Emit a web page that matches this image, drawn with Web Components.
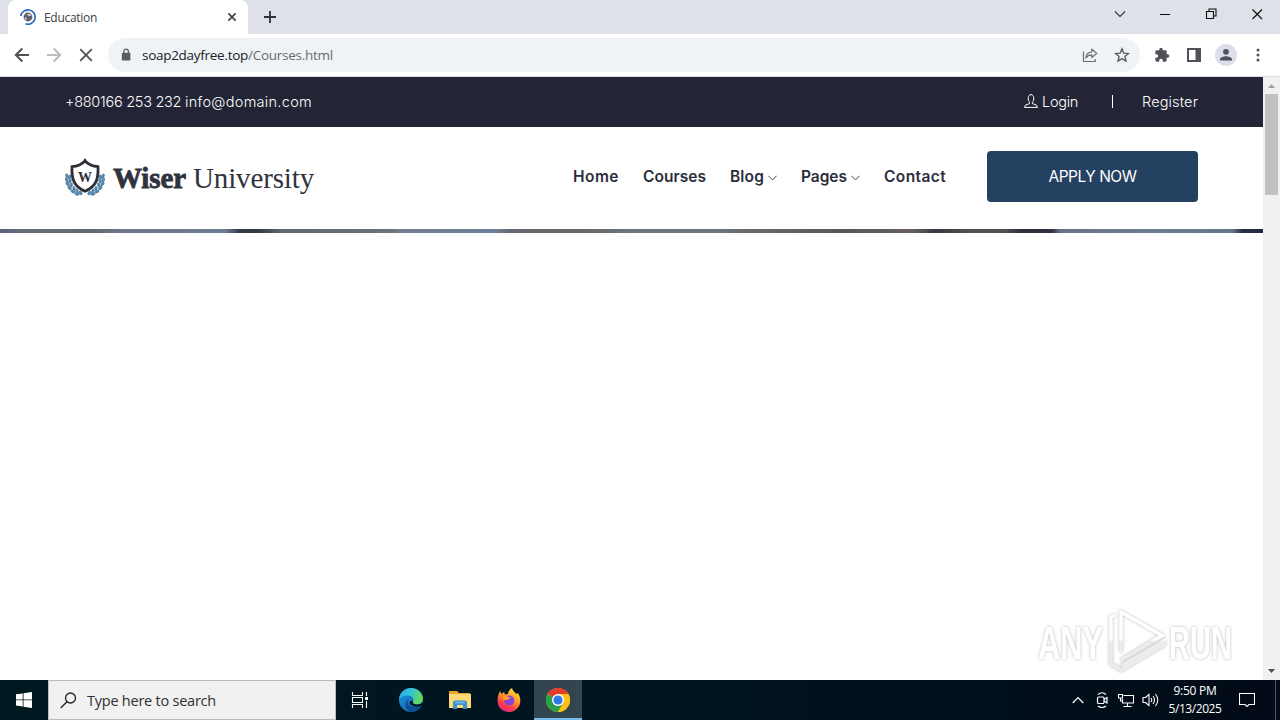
<!DOCTYPE html>
<html lang="en">
<head>
<meta charset="utf-8">
<title>Education</title>
<style>
    body {
        margin: 0;
        width: 1280px;
        height: 720px;
        overflow: hidden;
        background: white;
        font-family: "Open Sans", "Noto Sans", sans-serif;
    }
</style>
</head>
<body>
<desktop-screen>
    <tab-strip slot="window">Education</tab-strip>
    <tool-bar slot="window" host="soap2dayfree.top" path="/Courses.html"></tool-bar>
    <page-view slot="window">
        <top-bar></top-bar>
        <site-header></site-header>
        <hero-strip></hero-strip>
    </page-view>
    <task-bar slot="taskbar"></task-bar>
</desktop-screen>

<script>
function define(name, html, setup) {
  const template = document.createElement("template");
  template.innerHTML = html;

  class Element extends HTMLElement {
    constructor() {
      super();
      this.attachShadow({ mode: "open" });
      this.shadowRoot.appendChild(template.content.cloneNode(true));
    }

    connectedCallback() {
      if (setup) setup(this, this.shadowRoot);
    }
  }

  window.customElements.define(name, Element);
}

// one line of text, tracked so that it fills the given width
define("text-run", `
<style>
    :host {
        display: inline-block;
        white-space: nowrap;
        flex: none;
    }

    span {
        display: inline-block;
        white-space: pre;
    }
</style>
<span><slot></slot></span>
`, (el, root) => {
  const width = Number(el.getAttribute("width"));
  const span = root.querySelector("span");
  const spare = width - span.getBoundingClientRect().width;
  span.style.letterSpacing = spare / el.textContent.length + "px";
  el.style.width = width + "px";
});

define("desktop-screen", `
<style>
    :host {
        display: flex;
        flex-direction: column;
        width: 1280px;
        height: 720px;
        position: relative;
    }

    any-run {
        position: absolute;
        left: 1030px;
        top: 606px;
    }
</style>
<slot name="window"></slot>
<slot name="taskbar"></slot>
<any-run></any-run>
`);

define("tab-strip", `
<style>
    :host {
        display: flex;
        height: 34px;
        flex: none;
        background: #dee1e8;
        padding-left: 8px;
        box-sizing: border-box;
    }

    .tab {
        width: 240px;
        box-sizing: border-box;
        background: white;
        border-radius: 8px 8px 0 0;
        display: flex;
        align-items: center;
        padding: 0 11px 0 12px;
        font-size: 12px;
        color: #3c4043;
    }

    text-run {
        margin-left: 8px;
    }

    .close {
        margin-left: auto;
    }

    .plus {
        margin: 10px 0 0 15px;
    }

    .controls {
        margin-left: auto;
        display: flex;
        align-items: center;
        height: 28px;
        gap: 32px;
        padding-right: 17px;
    }

    svg {
        display: block;
        flex: none;
    }
</style>
<div class="tab">
    <svg width="16" height="16" viewBox="0 0 16 16" fill="none">
        <path d="M.8 7A7.2 7.2 0 1 1 5.5 14.8" stroke="#2b69c0" stroke-width="1.7"/>
        <path d="M3.2 3.6A6 6 0 0 1 8 1.9" stroke="#7fa6dc" stroke-width="1"/>
        <circle cx="8" cy="8" r="4.4" fill="#5f6368"/>
        <path d="M5 9.2l1.600.8M7.600 5.400l1.400.7 1.800.2" stroke="#e8e8e8" stroke-width="1.500"/>
    </svg>
    <text-run width="53"></text-run>
    <svg class="close" width="10" height="10" viewBox="0 0 10 10" stroke="#3c4043" stroke-width="1.6"><path d="M1.4 1.4l7.2 7.2M8.6 1.4l-7.2 7.2"/></svg>
</div>
<svg class="plus" width="14" height="14" viewBox="0 0 14 14" stroke="#2f3337" stroke-width="1.8"><path d="M7 1v12M1 7h12"/></svg>
<div class="controls">
    <svg width="14" height="12" viewBox="0 0 14 12" fill="none" stroke="#333" stroke-width="1.1"><path d="M2 3.500l5 5 5-5"/></svg>
    <svg width="12" height="12" viewBox="0 0 12 12" stroke="#111"><path d="M1 6.5h10"/></svg>
    <svg width="16" height="12" viewBox="0 0 16 12" fill="none" stroke="#111" stroke-width="1.1"><path d="M3.5 3.5h7v7h-7zM6 3V1h7v7h-2"/></svg>
    <svg width="12" height="12" viewBox="0 0 12 12" stroke="#111" stroke-width="1.2"><path d="M1.5 1.5l9.5 9.5M11 1.5L1.5 11"/></svg>
</div>
`, (el, root) => {
  const run = root.querySelector("text-run");
  run.textContent = el.textContent;
  run.connectedCallback();
});

define("tool-bar", `
<style>
    :host {
        display: flex;
        align-items: center;
        height: 43px;
        flex: none;
        box-sizing: border-box;
        border-bottom: 1px solid #dcdee2;
        padding: 0 12px 0 14px;
        background: white;
    }

    svg {
        display: block;
        flex: none;
    }

    .nav {
        display: flex;
        gap: 16px;
    }

    .omnibox {
        width: 1032px;
        height: 34px;
        box-sizing: border-box;
        margin-left: 14px;
        border-radius: 17px;
        background: #f0f3f5;
        display: flex;
        align-items: center;
        padding: 0 10px 0 12px;
        font-size: 13.5px;
        color: #202124;
    }

    .omnibox .host {
        margin-left: 10px;
    }

    .omnibox .path {
        color: #686c70;
    }

    .share {
        margin-left: auto;
    }

    .star {
        margin-left: 16px;
    }

    .tools {
        display: flex;
        align-items: center;
        margin-left: auto;
    }
</style>
<div class="nav">
    <svg width="16" height="16" viewBox="0 0 16 16" fill="none" stroke="#4f5357" stroke-width="2"><path d="M15 8H2M8.3 1.5L1.8 8l6.5 6.5"/></svg>
    <svg width="16" height="16" viewBox="0 0 16 16" fill="none" stroke="#babcbe" stroke-width="2"><path d="M1 8h13M7.7 1.5L14.2 8l-6.5 6.5"/></svg>
    <svg width="16" height="16" viewBox="0 0 16 16" fill="none" stroke="#4f5357" stroke-width="1.8"><path d="M2.2 2.2l11.6 11.6M13.8 2.2L2.2 13.8"/></svg>
</div>
<div class="omnibox">
    <svg width="12" height="14" viewBox="0 0 12 14"><rect x="1.8" y="4.8" width="8.6" height="7.8" rx="1" fill="#5a5e63"/><path d="M3.8 5V3.5a2.3 2.3 0 0 1 4.6 0V5" fill="none" stroke="#5a5e63" stroke-width="1.3"/></svg>
    <text-run class="host" width="106"></text-run>
    <text-run class="path" width="85"></text-run>
    <svg class="share" width="16" height="16" viewBox="0 0 16 16" fill="none" stroke="#696d71" stroke-width="1.2"><path d="M1.5 4.5v10h11.7V12"/><path d="M3.8 11c.3-4 2.5-5.8 6-6V2.2l5 4.2-5 4.1V7.8c-2.8 0-4.4.9-6 3.2z" stroke-linejoin="round"/></svg>
    <svg class="star" width="16" height="16" viewBox="0 0 16 16" fill="none" stroke="#5a5e63" stroke-width="1.4"><path d="M8 1.9l1.8 4.2 4.6.4-3.5 3 1.1 4.5-4-2.4L4 14l1.1-4.5-3.5-3 4.6-.4z"/></svg>
</div>
<div class="tools">
    <svg width="16" height="16" viewBox="0 0 24 24" fill="#4f5357"><path d="M20.5 11H19V7a2 2 0 0 0-2-2h-4V3.5a2.5 2.5 0 0 0-5 0V5H4a2 2 0 0 0-2 2v3.8h1.5a2.7 2.7 0 0 1 0 5.4H2V20a2 2 0 0 0 2 2h3.8v-1.5a2.7 2.7 0 0 1 5.4 0V22H17a2 2 0 0 0 2-2v-4h1.5a2.5 2.5 0 0 0 0-5z"/></svg>
    <svg width="14" height="14" viewBox="0 0 14 14" style="margin-left:17px"><path d="M0 0h14v14H0zM2 2v10h6.5V2z" fill="#4f5357" fill-rule="evenodd"/></svg>
    <svg width="22" height="22" viewBox="0 0 22 22" style="margin-left:14px"><circle cx="11" cy="11" r="11" fill="#dcdfe7"/><circle cx="11" cy="7.8" r="2.9" fill="#4c5060"/><path d="M5 16.6v-1.4c0-2 4-3 6-3s6 1 6 3v1.4z" fill="#4c5060"/></svg>
    <svg width="4" height="16" viewBox="0 0 4 16" fill="#4f5357" style="margin:0 8px 0 19px"><circle cx="2" cy="3" r="1.5"/><circle cx="2" cy="8" r="1.5"/><circle cx="2" cy="13" r="1.5"/></svg>
</div>
`, (el, root) => {
  for (const part of ["host", "path"]) {
    const run = root.querySelector("." + part);
    run.textContent = el.getAttribute(part);
    run.connectedCallback();
  }
});

define("page-view", `
<style>
    :host {
        display: flex;
        flex: 1;
        min-height: 0;
        background: white;
    }

    main {
        width: 1263px;
        font-family: Inter, "Open Sans", sans-serif;
    }

    aside {
        width: 17px;
        background: #f1f1f1;
        display: flex;
        flex-direction: column;
        align-items: center;
    }

    .thumb {
        width: 13px;
        height: 101px;
        background: #c1c1c1;
    }

    svg {
        display: block;
    }

    .down {
        margin-top: auto;
    }
</style>
<main><slot></slot></main>
<aside>
    <svg width="17" height="17" viewBox="0 0 17 17" fill="#a0a0a0"><path d="M5 11l3.5-4L12 11z"/></svg>
    <div class="thumb"></div>
    <svg class="down" width="17" height="17" viewBox="0 0 17 17" fill="#505050"><path d="M5 6l3.5 4L12 6z"/></svg>
</aside>
`);

define("top-bar", `
<style>
    :host {
        display: flex;
        align-items: center;
        height: 50px;
        box-sizing: border-box;
        padding: 0 65px 2px;
        background: #232536;
        color: white;
        font-size: 14.5px;
        font-weight: 300;
    }

    .account {
        margin-left: auto;
        display: flex;
        align-items: center;
    }

    .rule {
        width: 1px;
        height: 13px;
        background: white;
        margin: 0 29px 0 34px;
    }

    svg {
        margin-right: 4px;
    }
</style>
<text-run width="120">+880166 253 232 </text-run>
<text-run width="127">info@domain.com</text-run>
<div class="account">
    <svg width="14" height="14" viewBox="0 0 14 14" fill="none" stroke="white"><path d="M5.6 8.2C3.4 6.4 3.8.6 7 .6s3.6 5.8 1.4 7.6v1.4l4.1 1.5 1 2.3H.5l1-2.3 4.1-1.5z"/></svg>
    <text-run width="36">Login</text-run>
    <span class="rule"></span>
    <text-run width="56">Register</text-run>
</div>
`);

define("site-logo", `
<style>
    :host {
        display: flex;
        align-items: center;
        padding-top: 4px;
        color: #30333d;
        font-family: "Liberation Serif", serif;
        font-size: 29px;
        line-height: 38px;
    }

    svg {
        margin-right: 8px;
    }

    .wiser {
        font-weight: bold;
        -webkit-text-stroke: .8px #30333d;
        margin-right: 7px;
    }
</style>
<svg width="40" height="40" viewBox="0 0 40 40">
    <g id="leaves" fill="#5788ac"></g>
    <path d="M20 3c3.5 3.6 8.4 5.3 13 5.7.5 12-1.5 19.5-13 24.6C8.500 28.200 6.500 20.700 7 8.700 11.600 8.300 16.500 6.600 20 3z" fill="white" stroke="#2d2f35" stroke-width="2.8"/>
    <path d="M18.400 2.500L20 0l1.600 2.500z" fill="#2d2f35"/>
    <text x="20" y="23.500" text-anchor="middle" font-family="Liberation Serif" font-weight="bold" font-size="14" fill="#2d2f35">W</text>
</svg>
<text-run class="wiser" width="73">Wiser</text-run>
<text-run width="121">University</text-run>
`, (el, root) => {
  // laurel: pairs of leaves along each side of the shield
  const spots = [[2, 18, 70], [4.6, 19, 110], [1.8, 22, 60], [5, 23, 110], [2.6, 26, 50], [6.3, 27, 100], [4.6, 30, 40], [9, 30.500, 90], [8, 33.500, 25], [12, 33, 70], [12, 36, 10], [15.500, 35, 45]];
  root.querySelector("#leaves").innerHTML = spots.map(([x, y, a]) => `
    <ellipse cx="${x}" cy="${y}" rx="2.5" ry="1.6" transform="rotate(${a} ${x} ${y})"/>
    <ellipse cx="${40 - x}" cy="${y}" rx="2.5" ry="1.6" transform="rotate(${-a} ${40 - x} ${y})"/>`).join("");
});

define("nav-item", `
<style>
    :host {
        display: flex;
        align-items: center;
    }

    svg {
        display: none;
        margin: 4px 0 0 4px;
    }

    :host([menu]) svg {
        display: block;
    }
</style>
<slot></slot>
<svg width="9" height="6" viewBox="0 0 9 6" fill="none" stroke="#30333d" stroke-width=".9"><path d="M.3.700l4.200 4.200L8.700.700"/></svg>
`);

define("site-header", `
<style>
    :host {
        display: flex;
        align-items: center;
        height: 102px;
        box-sizing: border-box;
        padding: 0 65px 4px;
        background: white;
    }

    nav {
        margin-left: auto;
        display: flex;
        gap: 24px;
        color: #2b2d3b;
        font-size: 15.5px;
        font-weight: 600;
    }

    button {
        width: 211px;
        height: 51px;
        margin-left: 41px;
        padding: 0;
        border: 0;
        border-radius: 4px;
        background: #244161;
        color: white;
        font: 15.500px Inter, sans-serif;
    }
</style>
<site-logo></site-logo>
<nav>
    <nav-item><text-run width="46">Home</text-run></nav-item>
    <nav-item><text-run width="63">Courses</text-run></nav-item>
    <nav-item menu><text-run width="34">Blog</text-run></nav-item>
    <nav-item menu><text-run width="46">Pages</text-run></nav-item>
    <nav-item><text-run width="62">Contact</text-run></nav-item>
</nav>
<button><text-run width="88">APPLY NOW</text-run></button>
`);

define("hero-strip", `
<style>
    :host {
        display: block;
        height: 4px;
        background: linear-gradient(90deg,
            #59637a 0, #667079 30px, #606a70 90px, #6c7787 120px, #6e7d95 225px,
            #303b43 240px, #303943 257px, #61686d 282px, #697478 390px, #707d92 400px,
            #6f7e97 495px, #666b72 510px, #666 570px, #6b777c 640px, #6b777c 715px,
            #6b666b 755px, #595757 840px, #66605c 915px, #353744 935px, #55524e 970px,
            #53504e 1005px, #302f40 1020px, #2d2e3f 1052px, #667389 1060px, #6f7d90 1150px,
            #66758c 1232px, #252c45 1243px, #262b40 1263px);
    }
</style>
`);

// watermark in the corner of the screen
define("any-run", `
<style>
    :host {
        display: block;
        width: 210px;
        height: 70px;
    }

    svg {
        display: block;
        filter: drop-shadow(0 0 1.500px rgba(0, 0, 0, .28));
    }

    text {
        font: bold 46px "Liberation Sans", sans-serif;
    }
</style>
<svg width="210" height="70" viewBox="0 0 210 70">
    <defs>
        <linearGradient id="fade" gradientUnits="userSpaceOnUse" x1="0" y1="0" x2="0" y2="70">
            <stop offset=".49" stop-color="#fff"/>
            <stop offset=".5" stop-color="#ececec"/>
        </linearGradient>
    </defs>
    <g fill="url(#fade)">
        <text transform="translate(8 53) scale(.67 1)" textLength="97" lengthAdjust="spacingAndGlyphs">ANY</text>
        <text transform="translate(139 53) scale(.63 1)" textLength="100" lengthAdjust="spacingAndGlyphs">RUN</text>
    </g>
    <g fill="none" stroke="url(#fade)" stroke-width="3.500">
        <path d="M91 46V6l41 23.500L91 54"/>
        <path d="M85 9l-4 2v47l5 3M86 61l5 3 43-25v-4L91 60"/>
    </g>
</svg>
`);

define("task-bar", `
<style>
    :host {
        display: flex;
        align-items: center;
        height: 40px;
        flex: none;
        background: linear-gradient(90deg, #001820, #00141f 55%, #020b17);
        color: white;
    }

    svg {
        display: block;
        flex: none;
    }

    .start,
    .app {
        width: 48px;
        height: 40px;
        display: grid;
        place-items: center;
    }

    .search {
        width: 288px;
        height: 40px;
        box-sizing: border-box;
        border: 1px solid #bdbdbd;
        background: #f1f1f1;
        color: #303030;
        font-size: 14.5px;
        display: flex;
        align-items: center;
        padding-left: 11px;
        gap: 10px;
    }

    .apps {
        display: flex;
        gap: 1px;
    }

    .app.task {
        margin-right: 2px;
    }

    .app.active {
        background: #33454e;
        box-shadow: inset 0 -2px #76b9ed;
    }

    .tray {
        margin-left: auto;
        display: flex;
        align-items: center;
        gap: 8px;
    }

    .chevron {
        margin-right: 2px;
    }

    .clock {
        width: 54px;
        display: flex;
        flex-direction: column;
        align-items: center;
        font-size: 12px;
        line-height: 18px;
        padding-bottom: 1px;
    }

    .note {
        margin-left: 9px;
    }

    .peek {
        width: 1px;
        height: 40px;
        margin: 0 4px 0 12px;
        background: #4b5360;
    }
</style>
<div class="start">
    <svg width="16" height="16" viewBox="0 0 16 16" fill="white"><path d="M0 2.300L6.700 1.400v6.100H0zM7.500 1.300L16 0v7.500H7.500zM0 8.300h6.700v6.200L0 13.600zM7.500 8.300H16V16l-8.500-1.200z"/></svg>
</div>
<div class="search">
    <svg width="17" height="17" viewBox="0 0 17 17" fill="none" stroke="#222" stroke-width="1.300"><circle cx="10.500" cy="6" r="5"/><path d="M7 9.700L.700 16"/></svg>
    <text-run width="129">Type here to search</text-run>
</div>
<div class="apps">
    <div class="app task">
        <svg width="18" height="16" viewBox="0 0 18 16" fill="none" stroke="white" stroke-width="1.100"><path d="M1.500 0v3.500h10V0M1.500 5.500h10v5h-10zM1.500 16v-3.500h10V16M15.500 0v4M15.500 9v7"/><path d="M14 5h3v3h-3z" fill="white" stroke="none"/></svg>
    </div>
    <div class="app">
        <svg width="24" height="24" viewBox="0 0 24 24">
            <defs>
                <linearGradient id="top" x1="0" y1="0" x2="1" y2=".3"><stop stop-color="#28a7ee"/><stop offset=".5" stop-color="#32c3dc"/><stop offset="1" stop-color="#62d85e"/></linearGradient>
                <linearGradient id="low" x1="0" y1="0" x2="1" y2="1"><stop stop-color="#1b98e2"/><stop offset="1" stop-color="#1256a6"/></linearGradient>
            </defs>
            <circle cx="12" cy="12" r="12" fill="url(#low)"/>
            <path d="M0 11C.800 4.500 6 0 12 0c6.600 0 12 5 12 10.500 0 3.500-2.800 5.800-6 5.800-3 0-4.600-1.200-4.200-2.300 2-3.500-.800-6.500-5-6.500C5 7.500 1.500 9 0 11z" fill="url(#top)"/>
            <path d="M9 11c-2.500 6 3.500 10.500 13 6-2 4-6 7-10 7-5-1-8-9-3-13z" fill="#104d91"/>
            <path d="M14 13c-1 2 .500 3.500 4 3.600 2 0 3.500-.500 4.500-1.300l1.500 0-.800 2.200c-4 2-11.700 1.300-12.700-2.700 0-1.500 1.500-2.800 3.500-1.800z" fill="#001720"/>
        </svg>
    </div>
    <div class="app">
        <svg width="22" height="20" viewBox="0 0 22 20"><path d="M0 1h8l2 2h11v4H0z" fill="#e9a627"/><path d="M0 4h22v14H0z" fill="#fcd977"/><path d="M4 19v-6.500q0-2 2-2h10q2 0 2 2V19h-4v-4H8v4z" fill="#3c92cf"/><path d="M6 12.500h10" stroke="#75c0ed" stroke-width="1.500"/></svg>
    </div>
    <div class="app">
        <svg width="24" height="24" viewBox="0 0 24 24">
            <defs><linearGradient id="fox" x1=".8" y1="0" x2=".3" y2="1"><stop stop-color="#ffe43b"/><stop offset=".45" stop-color="#ff9528"/><stop offset=".75" stop-color="#fb3c4c"/><stop offset="1" stop-color="#e52484"/></linearGradient></defs>
            <path d="M3 3l1.500 3L7 4l1 2.500 3-.500C11 3.500 13 1 15 0c.500 3 3 4 4.500 6L21 5c2.500 4 3 8 1.500 12-2 4.700-6 7-10.500 7C5 24 .500 19 .500 12.500c0-3.500 1-6.500 2.500-9.500z" fill="url(#fox)"/>
            <circle cx="12.300" cy="12.500" r="5" fill="#8243da"/>
            <path d="M6 8.500c2-.900 4-.600 5.500.500l2.500.500c-.500 1.300-2.500 1.300-3 2.500-2 0-4 .500-5-1z" fill="#ff9a2d"/>
        </svg>
    </div>
    <div class="app active">
        <svg width="24" height="24" viewBox="0 0 24 24">
            <circle cx="12" cy="12" r="12" fill="#fbc116"/>
            <path d="M12 12L1.600 6A12 12 0 0 1 22.400 6z" fill="#e33b2e"/>
            <path d="M1.600 6A12 12 0 0 0 12 24l5.200-9L12 12z" fill="#29a14b"/>
            <path d="M12 6h10.400A12 12 0 0 1 12 24l5.200-9z" fill="#fbc116"/>
            <circle cx="12" cy="12" r="6" fill="white"/>
            <circle cx="12" cy="12" r="4.600" fill="#2f79e8"/>
        </svg>
    </div>
</div>
<div class="tray">
    <svg class="chevron" width="12" height="8" viewBox="0 0 12 8" fill="none" stroke="white" stroke-width="1.200"><path d="M.700 7L6 1.500 11.300 7"/></svg>
    <svg width="16" height="16" viewBox="0 0 16 16" fill="none" stroke="white" stroke-width="1.200"><rect x="3.500" y="5" width="6.500" height="6.500" rx="1"/><path d="M10 7.500l3-2v5.500l-3-2M4 2.500Q8 -1 12 2.500M4 14Q8 17 12 14"/></svg>
    <svg width="16" height="16" viewBox="0 0 16 16" fill="none" stroke="white" stroke-width="1.100"><path d="M5.500 3.500h10v7.500h-11V7M9.500 11v3.500M5.500 14.500h8"/><path d="M.500 2.500h4v3.500h-4zM2.500 6v3h2"/></svg>
    <svg width="18" height="16" viewBox="0 0 18 16" fill="none" stroke="white" stroke-width="1.100"><path d="M1 5.500h2.500l3.500-3v11l-3.500-3H1zM9 6q1.500 2 0 4M11 4q3 4 0 8M13.500 2q4.500 6 0 12"/></svg>
    <div class="clock">
        <text-run width="43">9:50 PM</text-run>
        <text-run width="53">5/13/2025</text-run>
    </div>
    <svg class="note" width="16" height="16" viewBox="0 0 16 16" fill="none" stroke="white" stroke-width="1.100"><path d="M.500 1.500h15v11H10L8 14.500l-2-2H.500z"/></svg>
    <span class="peek"></span>
</div>
`);
</script>
</body>
</html>
